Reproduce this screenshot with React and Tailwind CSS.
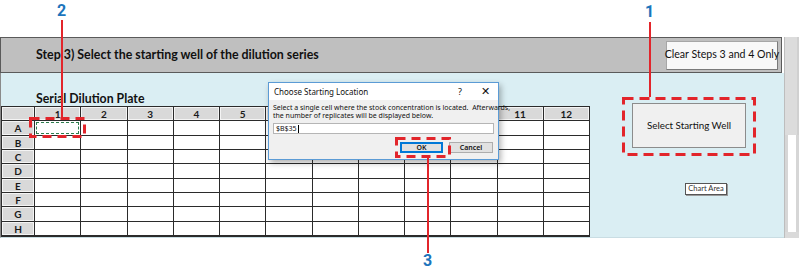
import React from "react";

const cols = Array.from({ length: 12 }, (_, i) => i + 1);
const rows = ["A", "B", "C", "D", "E", "F", "G", "H"];
// columns 6-10 sit under the dialog, their labels can't be seen
const hiddenCols = [6, 7, 8, 9, 10];

// Header / row label cell of the plate
const LabelCell = ({ children }) => (
  <div className="flex items-center justify-center border border-[#f4f4f4] bg-[#d9d9d9] text-[10px] font-bold leading-none text-[#1a1a1a]">
    {children}
  </div>
);

const PlateGrid = () => (
  <div className="grid w-[589px] grid-cols-[32px_repeat(12,minmax(0,1fr))] grid-rows-[13px_14px_13px_13px_14px_13px_13px_14px_13px] gap-px bg-[#2b2b2b] p-px pb-[2px]">
    <LabelCell />
    {cols.map((c) => (
      <LabelCell key={c}>{hiddenCols.includes(c) ? null : c}</LabelCell>
    ))}
    {rows.map((r) => (
      <React.Fragment key={r}>
        <LabelCell>{r}</LabelCell>
        {cols.map((c) => (
          <div key={c} className="relative bg-white">
            {r === "A" && c === 1 && (
              <div className="absolute inset-px border border-dashed border-[#2e7d4f]" />
            )}
          </div>
        ))}
      </React.Fragment>
    ))}
  </div>
);

const Dialog = () => (
  <div className="absolute left-[268px] top-[82px] flex h-[78px] w-[231px] flex-col border border-[#5b9bd5] bg-[#f0f0f0] font-['Noto_Sans',sans-serif] text-[#111] shadow-[2px_3px_6px_rgba(0,0,0,0.3)]">
    <div className="flex h-[17px] items-center justify-between bg-white pl-[5px] pr-[8px] text-[8px]">
      <span>Choose Starting Location</span>
      <div className="flex items-center gap-[19px] text-[9px]">
        <span>?</span>
        <span className="text-[11px] font-light">✕</span>
      </div>
    </div>
    <div className="flex flex-col px-[4px] pt-[4px]">
      <p className="text-[7px] leading-[8px] whitespace-nowrap">
        Select a single cell where the stock concentration is located.&nbsp; Afterwards,
        <br />
        the number of replicates will be displayed below.
      </p>
      <div className="mt-[3px] flex h-[11px] items-center border border-[#b5b5b5] bg-white pl-[2px] text-[7px] leading-none">
        $B$35<span className="ml-px h-[8px] w-px bg-black" />
      </div>
      <div className="mt-[8px] flex justify-end gap-[6px] pr-px">
        <div className="flex h-[11px] w-[43px] items-center justify-center border border-[#0078d7] bg-[#e1e1e1] text-[7px] font-semibold leading-none shadow-[inset_0_0_0_1px_#0078d7]">
          OK
        </div>
        <div className="flex h-[11px] w-[44px] items-center justify-center border border-[#adadad] bg-[#e1e1e1] text-[7px] font-semibold leading-none">
          Cancel
        </div>
      </div>
    </div>
  </div>
);

const Callouts = () => (
  <>
    <svg className="pointer-events-none absolute left-0 top-0" width="799" height="271">
      <g stroke="#e2252b" fill="none">
        <line x1="62" y1="20" x2="62" y2="117" strokeWidth="2" />
        <line x1="650" y1="22" x2="650" y2="97" strokeWidth="2" />
        <line x1="428" y1="158" x2="428" y2="253" strokeWidth="2" />
        <rect x="30.5" y="118.5" width="54" height="18" strokeWidth="3" strokeDasharray="9 6" />
        <rect x="623.5" y="98.5" width="131" height="56" strokeWidth="3" strokeDasharray="10 6" />
        <rect x="396.5" y="138.5" width="53" height="18" strokeWidth="3" strokeDasharray="9 6" />
      </g>
    </svg>
    <div className="absolute left-[57px] top-[3px] font-['Roboto',sans-serif] text-[16px] font-bold leading-none text-[#1c75bc]">2</div>
    <div className="absolute left-[645px] top-[4px] font-['Roboto',sans-serif] text-[16px] font-bold leading-none text-[#1c75bc]">1</div>
    <div className="absolute left-[423px] top-[253px] font-['Roboto',sans-serif] text-[16px] font-bold leading-none text-[#1c75bc]">3</div>
  </>
);

const Scrollbar = () => (
  <div className="flex w-[15px] flex-col border-l border-[#bdbdbd] bg-[#e6e6e6]">
    <div className="h-[98px] border-r-2 border-[#d0d0d0] bg-[#dcdcdc]" />
    <div className="flex-1 border-x-[3px] border-[#d6d6d6] bg-white" />
    <div className="h-[6px] bg-[#dadada]" />
  </div>
);

export default function App() {
  return (
    <div className="relative h-[271px] w-[799px] overflow-hidden bg-white font-['Lato',sans-serif] text-[#111]">
      <div className="h-[37px]" />
      <div className="flex h-[201px]">
        <div className="flex w-[784px] flex-col">
          {/* Step header */}
          <div className="flex h-[36px] w-[782px] items-center justify-between border border-[#5a5a5a] bg-[#bfbfbf] pl-[35px] pr-[3px]">
            <span className="text-[12.4px] font-bold whitespace-nowrap">
              Step 3) Select the starting well of the dilution series
            </span>
            <div className="flex h-[29px] w-[112px] items-center justify-center border border-[#a6a6a6] border-b-[#7a7a7a] border-r-[#7a7a7a] bg-[#f8f8f8] text-[10.6px] whitespace-nowrap">
              Clear Steps 3 and 4 Only
            </div>
          </div>

          {/* Plate area */}
          <div className="flex flex-1 border-b border-l border-b-[#c9dde3] border-l-[#8a8a8a] bg-[#daeef3]">
            <div className="flex flex-col pt-[18px]">
              <div className="h-[15px] pl-[35px] text-[12.3px] font-bold leading-[15px]">Serial Dilution Plate</div>
              <PlateGrid />
            </div>
            <div className="ml-[42px] flex flex-col items-start pt-[30px]">
              <div className="flex h-[45px] w-[114px] items-center justify-center border border-[#8c8c8c] bg-[#f0f0f0] text-[9.8px] whitespace-nowrap">
                Select Starting Well
              </div>
              <div className="ml-[53px] mt-[35px] flex h-[12px] w-[42px] items-center justify-center border border-[#555] bg-white text-[7.5px] leading-none text-[#333] shadow-[1px_1px_0_#999] whitespace-nowrap">
                Chart Area
              </div>
            </div>
          </div>
        </div>
        <Scrollbar />
      </div>
      <Dialog />
      <Callouts />
    </div>
  );
}
